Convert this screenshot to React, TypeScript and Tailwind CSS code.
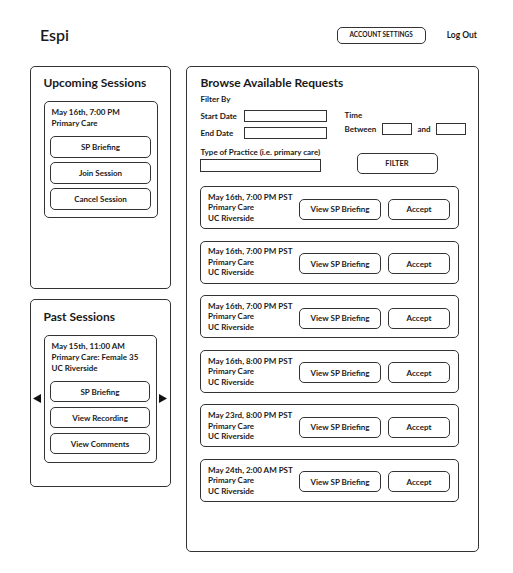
import React from "react";

const Btn = ({ label, cls }: { label: string; cls: string }) => (
  <div className={`flex items-center justify-center border-[1.5px] border-[#333] rounded-[5px] text-[8px] font-bold ${cls}`}>
    {label}
  </div>
);

const Input = ({ cls }: { cls: string }) => (
  <div className={`border-[1.5px] border-[#333] ${cls}`} />
);

const Arrow = ({ dir }: { dir: "l" | "r" }) => (
  <svg width="8" height="9" viewBox="0 0 8 9" className="shrink-0">
    {dir === "l" ? <polygon points="8,0 8,9 0,4.5" fill="#111" /> : <polygon points="0,0 0,9 8,4.5" fill="#111" />}
  </svg>
);

const requests = [
  "May 16th, 7:00 PM PST",
  "May 16th, 7:00 PM PST",
  "May 16th, 7:00 PM PST",
  "May 16th, 8:00 PM PST",
  "May 23rd, 8:00 PM PST",
  "May 24th, 2:00 AM PST",
];

export default function App() {
  return (
    <div className="w-[513px] h-[573px] bg-white text-[#1a1a1a] font-['Lato','Noto_Sans',sans-serif]">
      <div className="flex items-center h-[20px] mt-[25px] pl-[40px] pr-[36px]">
        <div className="text-[16px] font-semibold leading-none">Espi</div>
        <div className="ml-auto w-[89px] h-[17px] flex items-center justify-center border-[1.5px] border-[#333] rounded-[5px] text-[6.5px] font-bold">
          ACCOUNT SETTINGS
        </div>
        <div className="ml-[21px] text-[8.5px] font-bold">Log Out</div>
      </div>

      <div className="flex pl-[30px] gap-[15px] mt-[21px]">
        <div className="w-[141px] flex flex-col gap-[10px]">
          <div className="h-[223px] border-[1.5px] border-[#333] rounded-[5px] px-[12.5px] pt-[7.5px]">
            <div className="text-[12px] font-bold leading-[16px] whitespace-nowrap">Upcoming Sessions</div>
            <div className="mt-[10px] border-[1.5px] border-[#333] rounded-[5px] pt-[5.5px] pb-[7.5px] px-[5.5px]">
              <div className="pl-[1.5px] text-[8px] font-bold leading-[10.5px]">
                <div>May 16th, 7:00 PM</div>
                <div>Primary Care</div>
              </div>
              <div className="mt-[7.5px] flex flex-col gap-[4px]">
                <Btn label="SP Briefing" cls="h-[22px]" />
                <Btn label="Join Session" cls="h-[22px]" />
                <Btn label="Cancel Session" cls="h-[22px]" />
              </div>
            </div>
          </div>

          <div className="h-[188px] border-[1.5px] border-[#333] rounded-[5px] pt-[8.5px]">
            <div className="px-[12.5px] text-[12px] font-bold leading-[16px] whitespace-nowrap">Past Sessions</div>
            <div className="mt-[10px] flex items-center pl-[1.5px]">
              <Arrow dir="l" />
              <div className="ml-[3px] w-[113px] border-[1.5px] border-[#333] rounded-[5px] pt-[5.5px] pb-[7.5px] px-[5.5px]">
                <div className="pl-[1.5px] text-[8px] font-bold leading-[11px] whitespace-nowrap">
                  <div>May 15th, 11:00 AM</div>
                  <div>Primary Care: Female 35</div>
                  <div>UC Riverside</div>
                </div>
                <div className="mt-[7px] flex flex-col gap-[5px]">
                  <Btn label="SP Briefing" cls="h-[21px]" />
                  <Btn label="View Recording" cls="h-[21px]" />
                  <Btn label="View Comments" cls="h-[21px]" />
                </div>
              </div>
              <div className="ml-[2px]">
                <Arrow dir="r" />
              </div>
            </div>
          </div>
        </div>

        <div className="w-[293px] h-[486px] border-[1.5px] border-[#333] rounded-[5px] pl-[13.5px] pt-[8px]">
          <div className="text-[12px] font-bold leading-[16px]">Browse Available Requests</div>
          <div className="mt-[3px] text-[8px] font-bold leading-[10px]">Filter By</div>
          <div className="flex mt-[6px] text-[8px] font-bold">
            <div className="w-[144px]">
              <div className="flex items-center h-[12px]">
                <div className="w-[43px]">Start Date</div>
                <Input cls="w-[83px] h-[12px]" />
              </div>
              <div className="flex items-center h-[12px] mt-[5px]">
                <div className="w-[43px]">End Date</div>
                <Input cls="w-[83px] h-[12px]" />
              </div>
              <div className="mt-[8px] leading-[10px] whitespace-nowrap">Type of Practice (i.e. primary care)</div>
              <Input cls="mt-[2px] -ml-px w-[121px] h-[13px]" />
            </div>
            <div>
              <div className="leading-[10px]">Time</div>
              <div className="flex items-center h-[12px] mt-[3px]">
                <div className="w-[37px]">Between</div>
                <Input cls="w-[30px] h-[12px]" />
                <div className="ml-[6px] w-[18px]">and</div>
                <Input cls="w-[30px] h-[12px]" />
              </div>
              <div className="mt-[18px] ml-[12px] w-[81px] h-[21px] flex items-center justify-center border-[1.5px] border-[#333] rounded-[5px] text-[7.5px] font-bold">
                FILTER
              </div>
            </div>
          </div>

          <div className="mt-[12px] -ml-px flex flex-col gap-[11.6px]">
            {requests.map((d, i) => (
              <div key={i} className="w-[259px] h-[43px] border-[1.5px] border-[#333] rounded-[5px] flex items-center pl-[7.5px]">
                <div className="w-[91px] text-[8px] font-bold leading-[10.5px] whitespace-nowrap">
                  <div>{d}</div>
                  <div>Primary Care</div>
                  <div>UC Riverside</div>
                </div>
                <Btn label="View SP Briefing" cls="w-[82px] h-[21px] mt-[3px]" />
                <Btn label="Accept" cls="ml-[7px] w-[62px] h-[21px] mt-[3px]" />
              </div>
            ))}
          </div>
        </div>
      </div>
    </div>
  );
}
